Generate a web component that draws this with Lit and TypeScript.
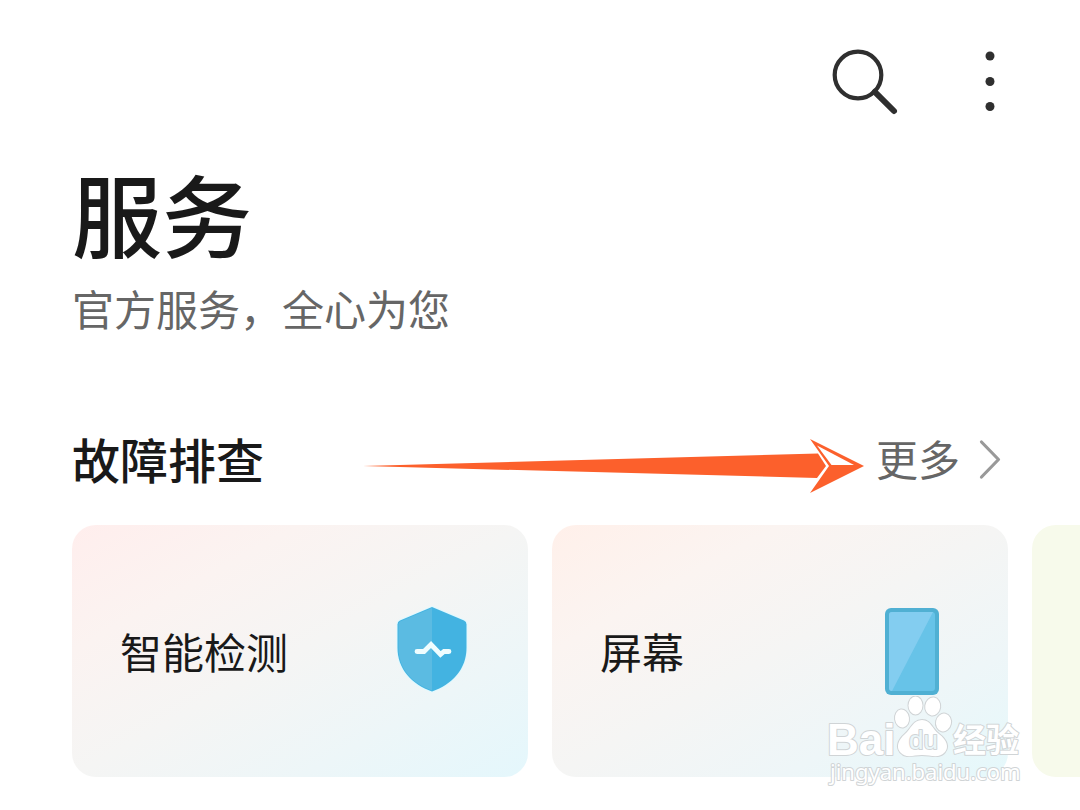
import { LitElement, html, css, svg } from "lit";
import { customElement } from "lit/decorators.js";

const searchIcon = svg`<svg class="icon" width="72" height="72" viewBox="0 0 72 72" fill="none" stroke="#2f2f2f" aria-hidden="true">
  <circle cx="30" cy="30" r="23.3" stroke-width="4.2"/>
  <path d="M46.800 46.800L66 66" stroke-width="6" stroke-linecap="round"/>
</svg>`;

const dotsIcon = svg`<svg class="icon" width="36" height="72" viewBox="0 0 36 72" fill="#2f2f2f" aria-hidden="true">
  <circle cx="18" cy="11" r="4.500"/><circle cx="18" cy="36.500" r="4.500"/><circle cx="18" cy="61.500" r="4.500"/>
</svg>`;

const chevronIcon = svg`<svg class="icon" width="36" height="48" viewBox="0 0 36 48" fill="none" stroke="#999" stroke-width="3.200" stroke-linecap="round" stroke-linejoin="round" aria-hidden="true">
  <path d="M9.500 8L26.500 25.500L9.500 43"/>
</svg>`;

const shieldIcon = svg`<svg class="icon" width="96" height="96" viewBox="0 0 96 96" aria-hidden="true">
  <path d="M48 4L80 17.500Q82.500 18.600 82.500 21.500V45C82.500 66 68 81.500 48 88.500C28 81.500 13.500 66 13.500 45V21.500Q13.500 18.600 16 17.500Z" fill="#43b3e1" stroke="#dff9ff" stroke-width="2" paint-order="stroke"/>
  <path d="M48 5L16.500 18.200Q14.500 19.200 14.500 21.500V45C14.500 66 28 80.500 48 87.500Z" fill="#5bbbe2"/>
  <path d="M33 48.500H40L47 41.500L56.500 51.500L60 48.500H65" fill="none" stroke="#effdff" stroke-width="4.800" stroke-linecap="round" stroke-linejoin="miter"/>
</svg>`;

const phoneIcon = svg`<svg class="icon" width="96" height="96" viewBox="0 0 96 96" aria-hidden="true">
  <rect x="21" y="5" width="54" height="87" rx="6" fill="#50b0d3"/>
  <rect x="25" y="9" width="46" height="79" rx="3" fill="#67c3e8"/>
  <path d="M28 9H69L28 88Q25 88 25 85V12Q25 9 28 9Z" fill="#83cdf0"/>
</svg>`;

const pointer = svg`<svg class="pointer" width="501" height="72" viewBox="0 0 501 72" aria-hidden="true">
  <path d="M0 44L455 31.500L463 44L454 56Z" fill="#fc602c"/>
  <path d="M447 17L501 44L447 71L466 44Z" fill="#fc602c"/>
  <path d="M454 23.500L491 43H468.500Z" fill="#fff"/>
</svg>`;

const watermark = svg`<svg class="watermark" width="208" height="100" viewBox="0 0 208 100" role="img" aria-label="Baidu 经验">
  <g fill="#fff" stroke="#d0d4d6" stroke-width="2" stroke-linejoin="round" paint-order="stroke">
    <text class="brand" x="5" y="59">Bai</text>
    <ellipse cx="80" cy="22.500" rx="7" ry="9" transform="rotate(-8 80 22.500)"/>
    <ellipse cx="93.500" cy="9.500" rx="7" ry="9"/>
    <ellipse cx="110.700" cy="10.500" rx="7.500" ry="9" transform="rotate(8 110.700 10.500)"/>
    <ellipse cx="121.500" cy="26.500" rx="7.500" ry="9" transform="rotate(12 121.500 26.500)"/>
    <path d="M100 24C91 24 89 33 83 38C76 44 74 51 78 56C84 63 91 59 100 59C109 59 117 63 123 56C127 51 125 44 117 38C110 33 109 24 100 24Z"/>
    <text class="du" x="87" y="53" fill="#eaf6f9">du</text>
    <text class="cjk" x="131" y="56">经验</text>
    <text class="site" x="8" y="84">jingyan.baidu.com</text>
  </g>
</svg>`;

@customElement("app-root")
export class AppRoot extends LitElement {
  static styles = css`
    :host {
      display: block;
      position: relative;
      min-height: 100vh;
      box-sizing: border-box;
      overflow: hidden;
      background: #fff;
      color: #191919;
      font-family: "Noto Sans CJK SC", sans-serif;
    }
    * { box-sizing: border-box; }
    button, a { color: inherit; font: inherit; text-decoration: none; }
    button { padding: 0; border: 0; background: none; cursor: pointer; }
    .icon { display: block; flex: none; }
    .toolbar {
      display: flex;
      justify-content: flex-end;
      gap: 72px;
      padding: 45px 72px 0;
    }
    .heading { padding: 35px 72px 0; }
    .title {
      margin: 0 0 6px;
      font-size: 90px;
      line-height: 120px;
      font-weight: 500;
    }
    .subtitle {
      margin: 0;
      font-size: 42px;
      line-height: 60px;
      color: #666;
    }
    .section-head {
      display: flex;
      align-items: center;
      gap: 12px;
      padding: 84px 72px 0;
    }
    .section-title {
      margin: 0;
      font-size: 48px;
      line-height: 72px;
      font-weight: 500;
    }
    .pointer { display: block; flex: none; margin-left: auto; }
    .more {
      display: flex;
      align-items: center;
      gap: 12px;
      font-size: 42px;
      line-height: 72px;
      color: #666;
    }
    .cards {
      display: flex;
      gap: 24px;
      padding: 31px 72px 0;
    }
    .card {
      flex: 0 0 calc(50% - 12px);
      display: flex;
      align-items: center;
      justify-content: space-between;
      height: 252px;
      padding: 0 48px;
      border-radius: 24px;
      font-size: 42px;
      line-height: 60px;
    }
    .card.pink { background: linear-gradient(to bottom right, #ffeeed 0%, #fbf3f1 25%, #f5f5f4 50%, #edf6f8 75%, #e4f7fc 100%); }
    .card.peach { background: linear-gradient(to bottom right, #fff0ea 0%, #fbf4f1 25%, #f5f5f4 50%, #eef6f8 75%, #e5f8fb 100%); }
    .card.lime { background: #f7faeb; }
    .watermark {
      position: absolute;
      right: 50px;
      bottom: 14px;
      display: block;
    }
    .brand { font: 700 44px "Liberation Sans", sans-serif; }
    .du { font: 400 26px "Liberation Sans", sans-serif; }
    .cjk { font: 700 33px "Noto Sans CJK SC", sans-serif; }
    .site { font: 400 22px "Noto Sans", sans-serif; }
  `;

  render() {
    return html`
      <header class="toolbar">
        <button type="button" aria-label="搜索">${searchIcon}</button>
        <button type="button" aria-label="菜单">${dotsIcon}</button>
      </header>
      <div class="heading">
        <h1 class="title">服务</h1>
        <p class="subtitle">官方服务，全心为您</p>
      </div>
      <section>
        <div class="section-head">
          <h2 class="section-title">故障排查</h2>
          ${pointer}
          <a class="more" href="#more">更多${chevronIcon}</a>
        </div>
        <div class="cards">
          <a class="card pink" href="#detect">智能检测${shieldIcon}</a>
          <a class="card peach" href="#screen">屏幕${phoneIcon}</a>
          <a class="card lime" href="#next" aria-label="下一项"></a>
        </div>
      </section>
      ${watermark}
    `;
  }
}
